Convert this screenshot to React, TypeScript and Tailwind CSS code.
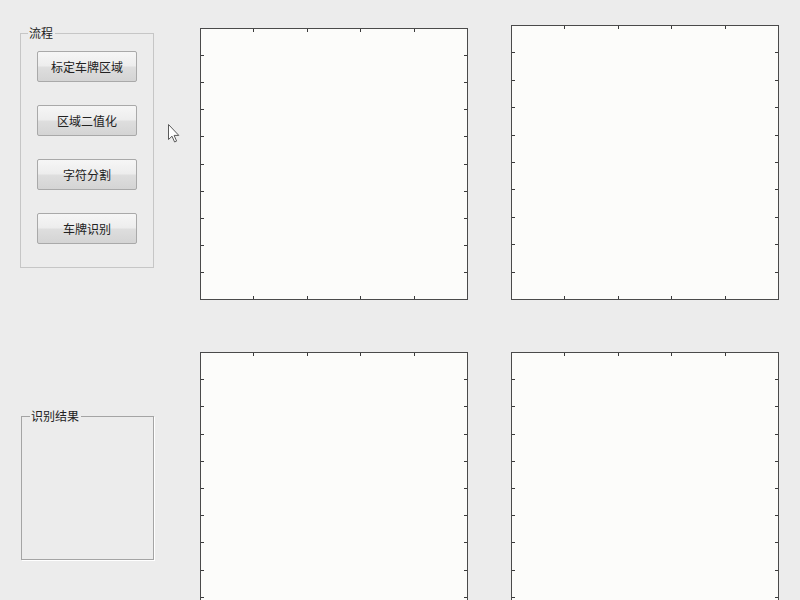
import React from "react"

const cjk = { fontFamily: '"Noto Sans CJK SC", "Noto Sans", sans-serif' }

// MATLAB-style axes box with inward ticks on all four sides
function Axes({ w, h, className }: { w: number; h: number; className: string }) {
  const xs = [1, 2, 3, 4].map((k) => Math.round(((w - 1) * k) / 5) + 0.5)
  const ys = [1, 2, 3, 4, 5, 6, 7, 8, 9].map((k) => Math.round(((h - 1) * k) / 10) + 0.5)
  return (
    <div className={`relative shrink-0 bg-[#fcfcfa] ${className}`} style={{ width: w, height: h }}>
      <svg className="absolute inset-0" width={w} height={h} shapeRendering="crispEdges">
        <rect x={0.5} y={0.5} width={w - 1} height={h - 1} fill="none" stroke="#4a4a4a" />
        {xs.map((x) => (
          <g key={x} stroke="#3a3a3a">
            <line x1={x} y1={1} x2={x} y2={4} />
            <line x1={x} y1={h - 4} x2={x} y2={h - 1} />
          </g>
        ))}
        {ys.map((y) => (
          <g key={y} stroke="#3a3a3a">
            <line x1={1} y1={y} x2={4} y2={y} />
            <line x1={w - 4} y1={y} x2={w - 1} y2={y} />
          </g>
        ))}
      </svg>
    </div>
  )
}

function Btn({ label }: { label: string }) {
  return (
    <button
      className="w-[100px] h-[31px] rounded-[2px] border border-[#a9a9a9] bg-[linear-gradient(#f6f6f6_0%,#ededed_48%,#dedede_52%,#d4d4d4_100%)] text-[12px] text-[#222] leading-none"
      style={cjk}
    >
      {label}
    </button>
  )
}

export default function App() {
  return (
    <div className="relative w-[800px] h-[600px] overflow-hidden bg-[#ececec] flex" style={cjk}>
      {/* left controls */}
      <div className="w-[200px] shrink-0 flex flex-col">
        {/* 流程 panel */}
        <div className="relative ml-[20px] mt-[33px] w-[134px] h-[235px] border border-[#c6c6c6] pl-[16px] pt-[17px] flex flex-col gap-[23px]">
          <span className="absolute -top-[9px] left-[7px] pl-[1px] pr-[2px] bg-[#ececec] text-[12px] leading-[16px] text-[#222]">
            流程
          </span>
          <Btn label="标定车牌区域" />
          <Btn label="区域二值化" />
          <Btn label="字符分割" />
          <Btn label="车牌识别" />
        </div>

        {/* 识别结果 panel */}
        <div className="relative ml-[21px] mt-[148px] w-[133px] h-[144px] border border-[#a4a4a4] shadow-[1px_1px_0_#ffffff]">
          <span className="absolute -top-[9px] left-[8px] pl-[1px] pr-[2px] bg-[#ececec] text-[12px] leading-[16px] text-[#222]">
            识别结果
          </span>
        </div>
      </div>

      {/* plot area */}
      <div className="flex flex-col">
        <div className="flex items-start gap-[43px]">
          <Axes w={268} h={272} className="mt-[28px]" />
          <Axes w={268} h={275} className="mt-[25px]" />
        </div>
        <div className="flex items-start gap-[43px] mt-[52px]">
          <Axes w={268} h={273} className="" />
          <Axes w={268} h={273} className="" />
        </div>
      </div>

      {/* mouse pointer */}
      <svg className="absolute left-[168px] top-[124px]" width="12" height="19" viewBox="0 0 12 19">
        <path d="M0.5 0.5 L0.5 15.5 L4 12.2 L6.6 18 L8.6 17.1 L6.1 11.4 L10.8 11.4 Z" fill="#ffffff" stroke="#5a5a5a" strokeWidth="1" />
      </svg>
    </div>
  )
}
